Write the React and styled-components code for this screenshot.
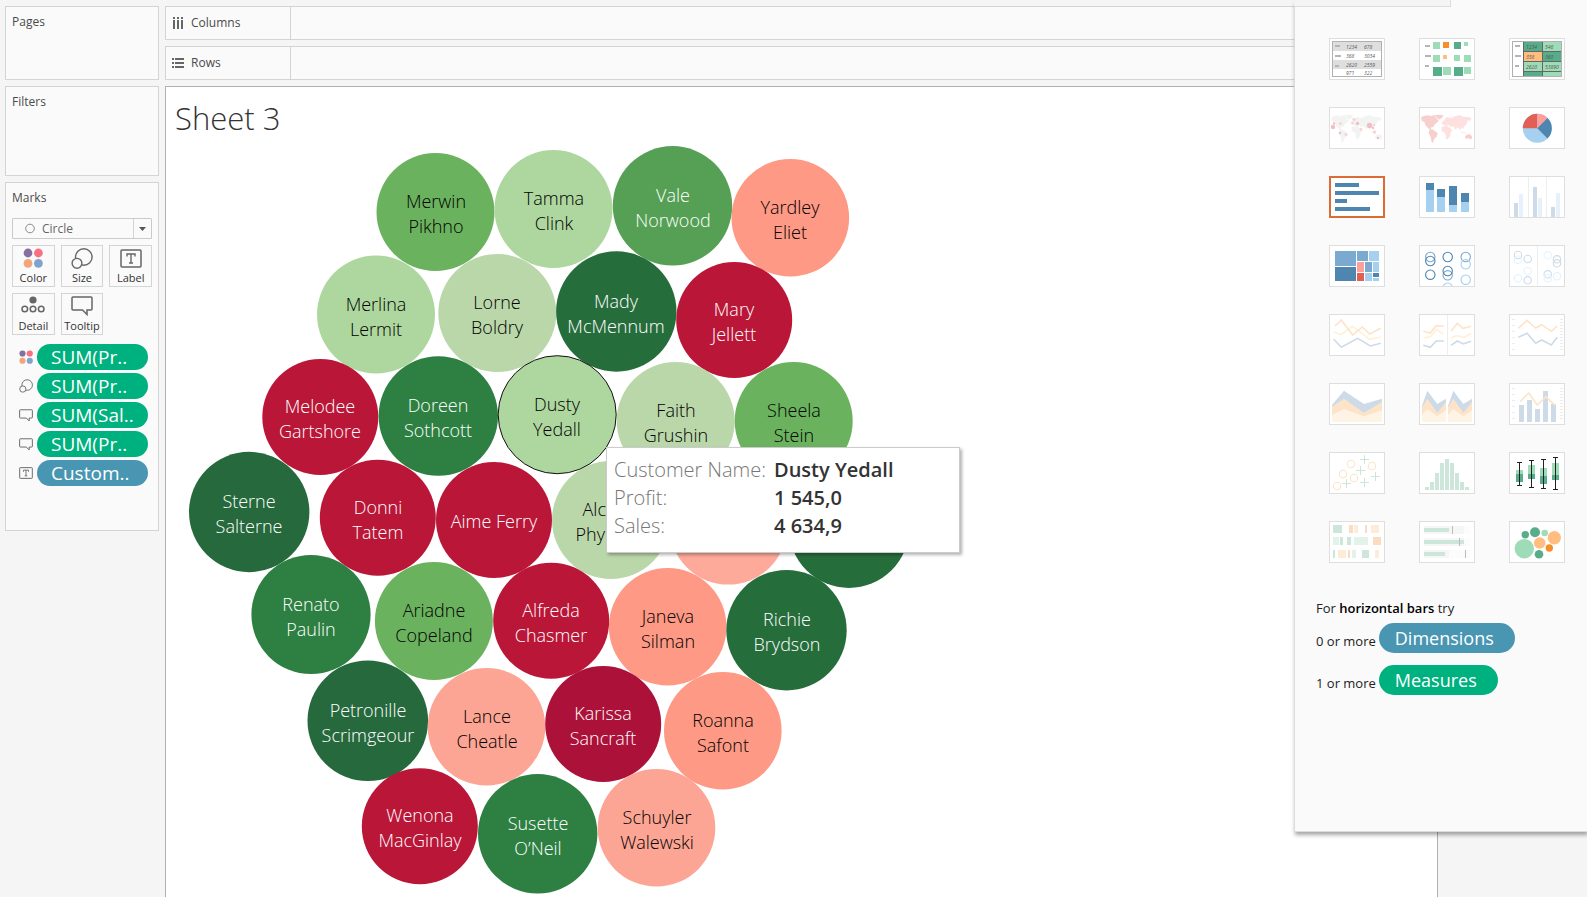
import React from "react";
import styled, { createGlobalStyle } from "styled-components";

const GlobalStyle = createGlobalStyle`
  *, *::before, *::after { box-sizing: border-box; }
  body {
    margin: 0;
    overflow: hidden;
    background: #f5f5f5;
    color: #4a4a4a;
    font-family: "Open Sans", "Noto Sans", sans-serif;
    font-size: 12px;
    line-height: 16px;
  }
  h1, h2, p { margin: 0; }
  button, select { font: inherit; color: inherit; }
`;

const UI = '"Open Sans", "Noto Sans", sans-serif';

const Workspace = styled.div`
  position: relative;
  display: flex;
  gap: 6px;
  height: 100vh;
  padding: 6px 149px 0 5px;
  overflow: hidden;
`;

const Cards = styled.aside`
  display: flex;
  flex-direction: column;
  flex: none;
  gap: 6px;
  width: 154px;
`;

const Card = styled.section`
  min-height: ${(p) => p.$min}px;
  padding: 7px 6px;
  border: 1px solid #d4d4d4;
  background: #fafafa;
`;

const CardTitle = styled.h2`
  font-size: 12px;
  line-height: 16px;
  font-weight: 400;
`;

const MarkType = styled.div`
  position: relative;
  margin-top: 12px;
`;

const MarkSelect = styled.select`
  display: block;
  width: 100%;
  height: 21px;
  padding: 0 24px 0 29px;
  border: 1px solid #cacaca;
  border-radius: 1px;
  background: #fafafa;
  color: #666;
  font-size: 12px;
  line-height: 19px;
  appearance: none;
`;

const MarkSelectArt = styled.svg`
  position: absolute;
  inset: 0;
  width: 140px;
  height: 21px;
  pointer-events: none;
`;

const MarkButtons = styled.div`
  display: grid;
  grid-template-columns: repeat(3, 1fr);
  gap: 6px;
  margin-top: 6px;
`;

const MarkButton = styled.button`
  display: flex;
  flex-direction: column;
  align-items: center;
  justify-content: space-between;
  height: 42px;
  padding: 2px 0 1px;
  border: 1px solid #d4d4d4;
  background: #fafafa;
  color: #333;
  font-size: 11px;
  line-height: 14px;
`;

const PillList = styled.ul`
  display: flex;
  flex-direction: column;
  gap: 3px;
  margin: 9px 4px 0 7px;
  padding: 0;
  list-style: none;
`;

const PillRow = styled.li`
  display: flex;
  align-items: center;
  gap: 4px;
`;

const Pill = styled.button`
  flex: ${(p) => (p.$large ? "none" : "1")};
  height: ${(p) => (p.$large ? 30 : 26)}px;
  padding: ${(p) => (p.$large ? "0 21px 0 16px" : "0 0 0 14px")};
  border: 0;
  border-radius: 15px;
  background: ${(p) => (p.$blue ? "#4996b2" : "#00b180")};
  color: #fff;
  font-size: ${(p) => (p.$large ? 18 : 19)}px;
  line-height: 24px;
  font-weight: 500;
  text-align: left;
`;

const Main = styled.main`
  display: flex;
  flex: 1;
  flex-direction: column;
  gap: 6px;
  min-width: 0;
`;

const Shelf = styled.section`
  display: flex;
  flex: none;
  height: 34px;
  border: 1px solid #d4d4d4;
  background: #fafafa;
`;

const ShelfLabel = styled.h2`
  display: flex;
  align-items: center;
  gap: 7px;
  width: 125px;
  padding-left: 6px;
  border-right: 1px solid #d4d4d4;
  font-size: 12px;
  line-height: 16px;
  font-weight: 400;
`;

const Sheet = styled.section`
  position: relative;
  flex: 1;
  min-height: 0;
  border: 1px solid #b0b0b0;
  border-bottom: 0;
  background: #fff;
`;

const SheetTitle = styled.h1`
  padding: 11px 0 1px 9px;
  color: #333;
  font-size: 31px;
  line-height: 40px;
  font-weight: 300;
`;

const Bubbles = styled.svg`
  display: block;
  width: 760px;
  height: 760px;
  font-family: "Open Sans", "Noto Sans", sans-serif;
  font-size: 18px;
  font-weight: 300;
  text-anchor: middle;
`;

const Tip = styled.dl`
  position: absolute;
  left: 440px;
  top: 360px;
  display: grid;
  grid-template-columns: 160px 1fr;
  align-content: start;
  width: 354px;
  height: 106px;
  margin: 0;
  padding: 8px 7px;
  border: 1px solid #ccc;
  background: #fff;
  box-shadow: 2px 2px 3px rgba(0, 0, 0, 0.3);
  font-size: 20px;
  line-height: 28px;
  font-weight: 300;
  color: #777;
  white-space: nowrap;

  dt, dd { margin: 0; height: 28px; }
  dd { color: #333; font-weight: 600; }
`;

const ShowMe = styled.aside`
  position: absolute;
  top: 0;
  right: 0;
  width: 293px;
  height: 832px;
  border: 1px solid #dcdcdc;
  border-width: 0 0 1px 1px;
  background: #fafafa;
  box-shadow: 1px 3px 4px rgba(0, 0, 0, 0.35);
`;

const Strip = styled.div`
  width: 157px;
  height: 7px;
  margin-left: -1px;
  border: 1px solid #dcdcdc;
  border-width: 0 1px 1px 0;
  background: #f4f4f4;
`;

const Thumbs = styled.div`
  display: grid;
  grid-template-columns: repeat(3, 56px);
  gap: 27px 34px;
  padding: 31px 0 0 34px;
`;

const Thumb = styled.button`
  display: block;
  width: 56px;
  height: 42px;
  padding: 0;
  border: 1px solid ${(p) => (p.$on ? "#dd6b35" : "#dedede")};
  background: #fff;
  box-shadow: ${(p) => (p.$on ? "inset 0 0 0 1px #dd6b35" : "none")};

  svg { display: block; width: 54px; height: 40px; }
`;

const Hint = styled.div`
  padding: 36px 0 0 21px;
  color: #222;
  font-size: 13px;
  line-height: 18px;

  b { color: #000; font-weight: 600; }
`;

const HintRow = styled.p`
  display: flex;
  align-items: center;
  gap: 3px;
  height: 42px;
  line-height: 30px;

  span { padding-top: 6px; }
`;

/* ---------- Marks card icons ---------- */

const ColorIcon = ({ s = 20 }) => (
  <svg width={s} height={s} viewBox="0 0 20 20">
    <circle cx="5" cy="5" r="4.4" fill="#8770a0" />
    <circle cx="15.4" cy="5" r="4.4" fill="#f97080" />
    <circle cx="5" cy="15.4" r="4.4" fill="#f2a57b" />
    <circle cx="15.4" cy="15.4" r="4.4" fill="#80a3cc" />
  </svg>
);

const SizeIcon = ({ w = 22, h = 21 }) => (
  <svg width={w} height={h} viewBox="0 0 22 21" fill="#fafafa" stroke="#666" strokeWidth="1.4">
    <circle cx="12.8" cy="9" r="8.3" />
    <circle cx="6" cy="15.3" r="4.9" />
  </svg>
);

const LabelIcon = ({ w = 22, h = 19 }) => (
  <svg width={w} height={h} viewBox="0 0 22 19" fill="none" stroke="#666">
    <rect x="1" y="1" width="20" height="17" rx="1" strokeWidth="1.5" />
    <path d="M7 7.5V5h8v2.500M11 5v9M9 14h4" strokeWidth="1.4" />
  </svg>
);

const DetailIcon = () => (
  <svg width="24" height="18" viewBox="0 0 24 18" fill="none" stroke="#666" strokeWidth="1.5">
    <circle cx="12" cy="4" r="3.6" fill="#666" stroke="none" />
    <circle cx="3.8" cy="13" r="2.800" />
    <circle cx="12" cy="13" r="2.800" />
    <circle cx="20.200" cy="13" r="2.800" />
  </svg>
);

const TooltipIcon = ({ w = 22, h = 20 }) => (
  <svg width={w} height={h} viewBox="0 0 22 20" fill="none" stroke="#666" strokeWidth="1.5">
    <path d="M2 1h18q1 0 1 1v11q0 1-1 1h-4v4.500L11.500 14H2q-1 0-1-1V2q0-1 1-1z" />
  </svg>
);

/* ---------- Chart type thumbnails ---------- */

const C = {
  deep: "#4f86b0", mid: "#7baad0", sky: "#a6d0f0",
  green: "#57ad8a", mint: "#9edcb7", orange: "#f69026", peach: "#ffbe7f",
  red: "#e25f55", pink: "#ff9f9b",
  fBlue: "#cddbe8", fSky: "#e5f2fc", fOrange: "#fde4c8", fYellow: "#fff1d6",
  fGreen: "#cde6da", fMint: "#e2f3ea", fPeach: "#fbdcc0", fCream: "#feecd8",
};

const Rects = ({ d }) =>
  d.map(([x, y, w, h, f], i) => <rect key={i} x={x} y={y} width={w} height={h} fill={f} />);

const Rings = ({ d, r }) =>
  d.map(([x, y, s], i) => (
    <circle key={i} cx={x} cy={y} r={r} fill="none" stroke={s} strokeWidth="1.1" />
  ));

const Lines = ({ d }) =>
  d.map(([s, pts], i) => (
    <polyline key={i} points={pts} fill="none" stroke={s} strokeWidth="1.6" />
  ));

const Dashes = () => (
  <Rects d={[[6, 7, 5, 2, "#b5b5b5"], [6, 17, 6, 2, "#b5b5b5"], [6, 27, 4, 2, "#b5b5b5"]]} />
);

const Figures = ({ d }) => (
  <g fontSize="5" fontStyle="italic" fontFamily={UI} fill="#555">
    {d.map(([x, y, t], i) => <text key={i} x={x} y={y}>{t}</text>)}
  </g>
);

const Ticks = () => (
  <path
    d="M3 5.500h3M3 11.500h3M3 17.500h3M3 23.500h3M3 29.500h3M3 35.500h3M51 5.500h3M51 8.500h3M51 11.500h3M51 14.500h3M51 17.500h3M51 20.500h3M51 23.500h3M51 26.500h3M51 29.500h3M51 32.500h3M51 35.500h3"
    stroke="#ececec"
  />
);

const West = "M6 31L14 27 24 25 38 27 44 24 50 30 54 36 60 42 52 48 46 54 43 60 37 61 35 66 41 70 38 71 30 66 24 60 18 52 16 44 8 42zM46 24L62 23 74 25 68 33 60 38 54 33zM31 69L40 67 56 78 53 89 46 95 42 107 38 106 35 90 29 79z";
const East = "M68 48L76 38 84 29 94 34 108 28 122 24 134 30 150 30 158 35 152 42 146 40 142 52 136 58 132 66 126 62 124 70 116 60 110 68 104 58 96 60 88 54 82 56 72 54zM68 60L84 56 94 64 100 70 94 78 94 86 86 97 82 97 80 84 76 76 68 72zM124 70L130 76 144 78 138 80 126 76z";
const Aus = "M138 88L146 82 154 82 160 90 156 98 150 94 140 96z";

const WorldMap = ({ west, east, aus }) => (
  <g transform="scale(0.3333)">
    <path d={West} fill={west} />
    <path d={East} fill={east} />
    <path d={Aus} fill={aus} />
  </g>
);

const Area = ({ x, p }) => (
  <g transform={`translate(${x} 0)`}>
    <path d={p[0]} fill={C.fBlue} />
    <path d={p[1]} fill="#fde4c8" />
    <path d={p[2]} fill="#fef4e6" />
  </g>
);

const narrow = [
  "M3 23L8.300 7.700 18.300 21 27 15.700V39H3z",
  "M3 24.500L8.300 15.700 18.300 29.700 27 19V39H3z",
  "M3 31.700L8.300 26.300 18.300 33.300 27 27.300V39H3z",
];
const wide = [
  "M3 22L15 7.700 35 21 53 15.700V39H3z",
  "M3 23.700L15 15.700 35 29.700 53 19V39H3z",
  "M3 31.700L15 26.300 35 33.300 53 27.300V39H3z",
];

const thumbs = [
  ["Text table", <>
    <Rects d={[[3, 3, 50, 10, "#dedede"], [3, 22, 50, 9, "#dedede"]]} />
    <Dashes />
    <Figures d={[[17, 10.500, "1234"], [35, 10.500, "678"], [17, 19.500, "368"], [35, 19.500, "3034"], [17, 28.500, "2620"], [35, 28.500, "2559"], [17, 36.500, "971"], [35, 36.500, "322"]]} />
    <rect x="3.500" y="3.500" width="49" height="35" fill="none" stroke="#b0b0b0" />
  </>],
  ["Heat map", <>
    <Dashes />
    <Rects d={[
      [14, 4, 7, 7, C.mint], [24, 4, 6, 6, C.orange], [35, 4, 7, 7, C.green], [45, 4, 4, 4, C.mint],
      [14, 17, 7, 7, C.mint], [24, 17, 4, 4, C.peach], [35, 17, 6, 6, C.mint], [45, 17, 7, 7, C.mint],
      [14, 29, 9, 9, C.green], [24, 29, 8, 8, C.mint], [35, 29, 9, 9, C.green], [45, 29, 7, 7, C.mint],
    ]} />
  </>],
  ["Highlight table", <>
    <Dashes />
    <Rects d={[
      [14, 3, 38, 35, "#666"],
      [15, 4, 18, 9, C.green], [34, 4, 18, 9, C.mint], [15, 14, 18, 9, C.peach], [34, 14, 18, 9, C.green],
      [15, 24, 18, 9, C.mint], [34, 24, 18, 9, C.mint], [15, 34, 18, 4, C.green], [34, 34, 18, 4, C.mint],
    ]} />
    <Figures d={[[17, 10.500, "1234"], [36, 10.500, "546"], [17, 20.500, "358"], [36, 20.500, "360"], [17, 30.500, "2620"], [36, 30.500, "53890"]]} />
    <rect x="3.500" y="3.500" width="49" height="35" fill="none" stroke="#b0b0b0" />
  </>],
  ["Symbol map", <>
    <WorldMap west="#f3f3f3" east="#f3f3f3" aus="#f3f3f3" />
    {[[4, 20, 2.200, 1], [5, 16.500, 1.200, 1], [11.500, 16.500, 1.600], [11, 26, 1.200, 1], [17, 27.500, 1.600], [25, 12.500, 1.700], [23.500, 16, 1.500], [28.500, 16.500, 1.700, 1], [32, 22.500, 1.400], [40.500, 18.500, 2.700, 1], [45, 18, 1.200], [44, 21, 1.200, 1], [45.500, 25, 1.800], [49, 31, 1.300, 1]].map(([x, y, r, k], i) => (
      <circle key={i} cx={x} cy={y} r={r} fill={k ? "#ecc0c6" : "#f8d5d5"} />
    ))}
  </>],
  ["Filled map", <WorldMap west="#f7cfcd" east="#fde0df" aus="#f7cfcd" />],
  ["Pie chart", <>
    <circle cx="28.300" cy="21.300" r="14.500" fill={C.sky} />
    <path d="M28.300 21.300H13.800A14.500 14.500 0 0 1 28.300 6.800z" fill={C.red} />
    <path d="M28.300 21.300V6.800A14.500 14.500 0 0 1 38.500 11z" fill={C.pink} />
    <path d="M28.300 21.300L38.500 11A14.500 14.500 0 0 1 38.500 31.600z" fill={C.deep} />
  </>],
  ["Horizontal bars", <Rects d={[[6, 7, 24, 4, C.deep], [6, 15, 44, 4, C.deep], [6, 23, 12, 4, C.deep], [6, 31, 35, 4, C.deep]]} />],
  ["Stacked bars", <Rects d={[
    [7, 7, 8, 7, C.deep], [7, 14, 8, 22, C.sky], [18, 13, 8, 8, C.deep], [18, 21, 8, 15, C.sky],
    [30, 10, 8, 19, C.deep], [30, 29, 8, 7, C.sky], [42, 17, 8, 9, C.deep], [42, 26, 8, 10, C.sky],
  ]} />],
  ["Side-by-side bars", <Rects d={[
    [19, 1, 1, 40, "#eee"], [37, 1, 1, 40, "#eee"],
    [5, 27, 4, 14, C.fBlue], [10, 18, 4, 23, C.fSky], [24, 11, 4, 30, C.fBlue],
    [29, 22, 4, 19, C.fSky], [42, 31, 4, 10, C.fBlue], [47, 17, 4, 24, C.fSky],
  ]} />],
  ["Treemap", <Rects d={[
    [6, 6, 21, 15, C.mid], [6, 22, 21, 14, C.deep], [28, 6, 11, 10, C.mid], [40, 6, 10, 10, C.sky],
    [28, 17, 7, 10, C.pink], [36, 17, 7, 10, C.mid], [44, 17, 6, 10, C.sky], [28, 28, 7, 8, C.red],
    [36, 28, 7, 8, C.sky], [44, 28, 6, 4, C.deep], [44, 33, 6, 3, C.sky],
  ]} />],
  ["Circle views", <Rings r="4.700" d={[
    [11.300, 12, C.mid], [11.300, 16, C.deep], [11.300, 29.700, C.deep], [28.700, 12, C.deep], [28.700, 30.300, C.mid],
    [28.700, 26, C.deep], [28.700, 42.700, C.sky], [46.700, 12, C.mid], [46.700, 19.300, C.sky], [46.700, 34.700, C.sky],
  ]} />],
  ["Side-by-side circles", <>
    <Rects d={[[28, 1, 1, 40, "#eee"]]} />
    <Rings r="3.700" d={[
      [9, 10, C.fBlue], [9, 14.700, C.fSky], [18.700, 14, C.fBlue], [18.700, 26, C.fSky], [9, 33.300, C.fSky], [18.700, 35.300, C.fBlue],
      [38.700, 10.300, C.fSky], [48, 14.300, C.fBlue], [48, 18.300, C.fBlue], [38.700, 29.300, C.fBlue], [38.700, 33.300, C.fSky], [48, 31.300, C.fSky],
    ]} />
  </>],
  ["Continuous lines", <Lines d={[
    [C.fYellow, "4.700,18 12.300,20.700 23.300,12 40.700,25.300 51.700,23"],
    [C.fOrange, "6,12 12.300,6 23.700,21 33.300,13 40.700,20 51.700,14.300"],
    [C.fBlue, "4.700,25.300 12.300,33.300 28.700,24.300 41.300,32 51.700,29.300"],
  ]} />],
  ["Discrete lines", <>
    <Rects d={[[28, 1, 1, 40, "#eee"]]} />
    <Lines d={[
      [C.fYellow, "4.300,24 11.300,22.700 17.700,15.300 24.300,20.300"], [C.fYellow, "32,24 37.700,21.700 45,23.300 52,19.300"],
      [C.fOrange, "4.300,17.300 11.300,19 17.300,11.700 25,12.300"], [C.fOrange, "32,17.300 38.300,9.300 44,14.300 52,12.300"],
      [C.fBlue, "4.300,31.300 11.300,33.300 17.300,27 25,27"], [C.fBlue, "32,31.300 38.300,27 44.300,30 52,27.300"],
    ]} />
  </>],
  ["Dual lines", <>
    <Ticks />
    <Lines d={[
      [C.fOrange, "9.300,14.300 18,6.300 26.700,14 32.700,10.700 42.300,17.300 48.300,12"],
      [C.fBlue, "9.300,23.300 18,19.300 26.700,29.300 32.700,26 42.300,31 48.300,23.300"],
    ]} />
  </>],
  ["Continuous area", <Area x={0} p={wide} />],
  ["Discrete area", <><Area x={0} p={narrow} /><Area x={26} p={narrow} /></>],
  ["Dual combination", <>
    <Ticks />
    <Rects d={[[10, 22, 5, 17, C.fBlue], [18, 17, 5, 22, C.fBlue], [26, 26, 5, 13, C.fBlue], [34, 8, 5, 31, C.fBlue], [42, 21, 5, 18, C.fBlue]]} />
    <Lines d={[[C.fOrange, "11,18.700 19.700,10 28.300,22 37,13.700 46,22.300"]]} />
  </>],
  ["Scatter plot", <>
    <Rings r="3.700" d={[[22, 12, C.fOrange], [43, 14, C.fOrange], [14, 22, C.fOrange], [25, 26, C.fOrange], [8, 34, C.fOrange]]} />
    <path d="M31 7.500h9M35.500 3v9M27 18.500h9M31.500 14v9M42 24.500h9M46.500 20v9M13 31.500h9M17.500 27v9M31 30.500h9M35.500 26v9" stroke={C.fGreen} />
  </>],
  ["Histogram", <Rects d={[35, 30, 21, 11, 7, 11, 21, 30, 35].map((y, i) => [6 + i * 5, y, 4, 38 - y, C.fGreen])} />],
  ["Box-and-whisker plot", <>
    <Rects d={[
      [7, 18, 7, 4, C.mint], [7, 22, 7, 8, C.green], [19, 13, 7, 9, C.mint], [19, 22, 7, 5, C.green],
      [31, 16, 7, 8, C.mint], [31, 24, 7, 8, C.green], [43, 11, 7, 12, C.mint], [43, 23, 7, 5, C.green],
    ]} />
    <path d="M8 10.500h5M10.500 10v23M8 33.500h5M20 8.500h5M22.500 8v27M20 35.500h5M32 7.500h5M34.500 7v29M32 36.500h5M44 5.500h5M46.500 5v32M44 37.500h5" stroke="#222" />
  </>],
  ["Gantt chart", <Rects d={[
    [4, 4, 9, 8, C.fGreen], [20, 4, 4, 8, C.fPeach], [25, 4, 4, 8, C.fCream], [36, 4, 2, 8, C.fPeach], [42, 4, 8, 8, C.fCream],
    [4, 16, 6, 8, C.fMint], [11, 16, 3, 8, C.fGreen], [18, 16, 4, 8, C.fGreen], [25, 16, 14, 8, C.fMint], [44, 16, 8, 8, C.fPeach],
    [4, 29, 2, 8, C.fGreen], [9, 29, 8, 8, C.fCream], [19, 29, 2, 8, C.fPeach], [23, 29, 4, 8, C.fMint], [33, 29, 7, 8, C.fGreen], [46, 29, 4, 8, C.fCream],
  ]} />],
  ["Bullet graph", <Rects d={[
    [5, 5, 46, 8, "#fcfcfc"], [5, 5, 40, 8, "#f6f6f6"], [5, 17, 46, 8, "#fcfcfc"], [5, 17, 40, 8, "#f6f6f6"],
    [5, 29, 46, 8, "#fcfcfc"], [5, 29, 25, 8, "#f6f6f6"],
    [5, 7, 25, 4, C.fGreen], [5, 19, 40, 4, C.fGreen], [5, 31, 21, 4, C.fGreen],
    [33, 5, 1, 8, "#bbb"], [40, 17, 1, 8, "#bbb"], [46, 29, 1, 8, "#bbb"],
  ]} />],
  ["Packed bubbles", <>
    {[[15.300, 27.700, 9.700, C.mint], [16.300, 13.700, 3.700, C.green], [26, 11.300, 5, C.green], [35.700, 12, 3.300, C.mint], [45.300, 16.700, 6.700, C.peach], [30.700, 22, 5.800, C.peach], [40.300, 27, 3.700, C.orange], [30, 33.300, 4.300, C.green]].map(([x, y, r, f], i) => (
      <circle key={i} cx={x} cy={y} r={r} fill={f} />
    ))}
  </>],
];

/* ---------- Customers: centre, radius, fill, dark text, name ---------- */

const customers = [
  [435.5, 212, 59, "#6bb25f", 1, "Merwin", "Pikhno"],
  [553.5, 209, 59, "#aed79f", 1, "Tamma", "Clink"],
  [672.5, 205.8, 59.7, "#55a054", 0, "Vale", "Norwood"],
  [790.3, 217.8, 58.8, "#fd9984", 1, "Yardley", "Eliet"],
  [376, 314.5, 59, "#aed79f", 1, "Merlina", "Lermit"],
  [497.3, 313, 59, "#bad7aa", 1, "Lorne", "Boldry"],
  [616.3, 311.5, 60.2, "#266d3c", 0, "Mady", "McMennum"],
  [734.2, 320, 58, "#ba1638", 0, "Mary", "Jellett"],
  [320.3, 417, 58, "#ba1638", 0, "Melodee", "Gartshore"],
  [438.3, 416, 59.7, "#2d8042", 0, "Doreen", "Sothcott"],
  [675.7, 421, 59, "#bad7aa", 1, "Faith", "Grushin"],
  [793.7, 421, 59, "#6bb25f", 1, "Sheela", "Stein"],
  [249.2, 512, 60.2, "#25693d", 0, "Sterne", "Salterne"],
  [377.8, 517.7, 58, "#ba1638", 0, "Donni", "Tatem"],
  [494, 520, 58, "#ba1638", 0, "Aime Ferry"],
  [611, 520, 59, "#bad7aa", 1],
  [728.3, 526, 58.6, "#feaa9b", 1],
  [849, 527.7, 60.2, "#266d3c", 0],
  [311, 614.5, 59.6, "#2d8042", 0, "Renato", "Paulin"],
  [433.9, 621, 59, "#6bb25f", 1, "Ariadne", "Copeland"],
  [551.2, 620.7, 58, "#ba1638", 0, "Alfreda", "Chasmer"],
  [667.7, 626.8, 58.8, "#fd9984", 1, "Janeva", "Silman"],
  [786.5, 630.2, 60.2, "#266d3c", 0, "Richie", "Brydson"],
  [367.8, 720.8, 60.3, "#25693d", 0, "Petronille", "Scrimgeour"],
  [486.5, 726.8, 58.8, "#fca594", 1, "Lance", "Cheatle"],
  [603.2, 724, 58, "#ac1139", 0, "Karissa", "Sancraft"],
  [722.8, 730.8, 58.8, "#fd9984", 1, "Roanna", "Safont"],
  [419.8, 826.2, 58, "#ba1638", 0, "Wenona", "MacGinlay"],
  [537.7, 833.8, 59.7, "#2d8042", 0, "Susette", "O’Neil"],
  [656.5, 827.8, 58.8, "#fca594", 1, "Schuyler", "Walewski"],
  [557.2, 414.7, 59, "#aed79f", 1, "Dusty", "Yedall", "#111"],
];

const Bubble = ({ d: [cx, cy, r, fill, dark, first, last, ring] }) => {
  const x = Math.round(cx);
  const y = Math.round(cy) + (last ? -4 : 8);
  return (
    <g>
      <circle cx={cx} cy={cy} r={r} fill={fill} stroke={ring || "none"} />
      <g fill={dark ? "#000" : "#fff"}>
        {first && <text x={x} y={y}>{first}</text>}
        {last && <text x={x} y={y + 25}>{last}</text>}
      </g>
    </g>
  );
};

const pills = [
  [<ColorIcon s={14} />, "SUM(Pr.."],
  [<SizeIcon w={14} h={14} />, "SUM(Pr.."],
  [<TooltipIcon w={14} h={13} />, "SUM(Sal.."],
  [<TooltipIcon w={14} h={13} />, "SUM(Pr.."],
  [<LabelIcon w={14} h={12} />, "Custom..", true],
];

export default function App() {
  return (
    <>
      <GlobalStyle />
      <Workspace>
        <Cards>
          <Card $min={74}><CardTitle>Pages</CardTitle></Card>
          <Card $min={90}><CardTitle>Filters</CardTitle></Card>
          <Card $min={349}>
            <CardTitle>Marks</CardTitle>
            <MarkType>
              <MarkSelect aria-label="Mark type"><option>Circle</option></MarkSelect>
              <MarkSelectArt viewBox="0 0 140 21" aria-hidden="true">
                <circle cx="18" cy="10.500" r="4.300" fill="none" stroke="#888" />
                <path d="M121.500 1v19" stroke="#d4d4d4" />
                <path d="M127 9h7l-3.500 4z" fill="#555" />
              </MarkSelectArt>
            </MarkType>
            <MarkButtons>
              <MarkButton><ColorIcon />Color</MarkButton>
              <MarkButton><SizeIcon />Size</MarkButton>
              <MarkButton><LabelIcon h={21} />Label</MarkButton>
              <MarkButton><DetailIcon />Detail</MarkButton>
              <MarkButton><TooltipIcon />Tooltip</MarkButton>
            </MarkButtons>
            <PillList>
              {pills.map(([icon, label, blue], i) => (
                <PillRow key={i}>{icon}<Pill $blue={blue}>{label}</Pill></PillRow>
              ))}
            </PillList>
          </Card>
        </Cards>

        <Main>
          <Shelf>
            <ShelfLabel>
              <svg width="12" height="12" viewBox="0 0 12 12" fill="#666">
                <path d="M1 0h2v2H1zM5 0h2v2H5zM9 0h2v2H9zM1 3h2v9H1zM5 3h2v9H5zM9 3h2v9H9z" />
              </svg>
              Columns
            </ShelfLabel>
          </Shelf>
          <Shelf>
            <ShelfLabel>
              <svg width="12" height="12" viewBox="0 0 12 12" fill="#666">
                <path d="M0 1h2v2H0zM0 5h2v2H0zM0 9h2v2H0zM3 1h9v2H3zM3 5h9v2H3zM3 9h9v2H3z" />
              </svg>
              Rows
            </ShelfLabel>
          </Shelf>
          <Sheet>
            <SheetTitle>Sheet 3</SheetTitle>
            <Bubbles viewBox="166 139 760 760" role="img" aria-label="Customers by profit">
              {customers.map((d, i) => <Bubble key={i} d={d} />)}
              <g textAnchor="end">
                <text x="606" y="516">Alc</text>
                <text x="605" y="541">Phy</text>
              </g>
            </Bubbles>
            <Tip>
              <dt>Customer Name:</dt><dd>Dusty Yedall</dd>
              <dt>Profit:</dt><dd>1 545,0</dd>
              <dt>Sales:</dt><dd>4 634,9</dd>
            </Tip>
          </Sheet>
        </Main>

        <ShowMe>
          <Strip />
          <Thumbs>
            {thumbs.map(([name, art]) => (
              <Thumb key={name} aria-label={name} $on={name === "Horizontal bars"}>
                <svg viewBox="1 1 54 40">{art}</svg>
              </Thumb>
            ))}
          </Thumbs>
          <Hint>
            <p>For <b>horizontal bars</b> try</p>
            <HintRow><span>0 or more</span><Pill $large $blue>Dimensions</Pill></HintRow>
            <HintRow><span>1 or more</span><Pill $large>Measures</Pill></HintRow>
          </Hint>
        </ShowMe>
      </Workspace>
    </>
  );
}
